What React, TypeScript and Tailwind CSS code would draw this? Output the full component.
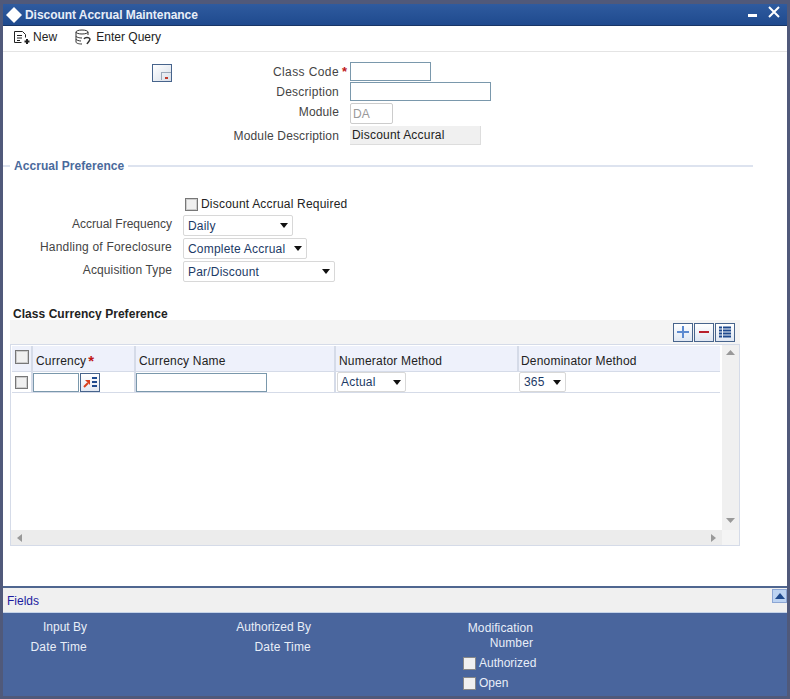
import React from 'react';

const Label = ({ children, className = '' }: { children: React.ReactNode; className?: string }) => (
  <div className={`text-right text-[12px] text-[#444] ${className}`}>{children}</div>
);

const Select = ({ value, className }: { value: string; className: string }) => (
  <div className={`flex items-center justify-between rounded-[2px] border border-[#d8d8d8] bg-white pr-[4px] text-[12px] tracking-[0.2px] text-[#1c3a66] ${className}`}>
    <span>{value}</span>
    <svg width="8" height="5" viewBox="0 0 8 5"><path d="M0 0h8L4 5z" fill="#111" /></svg>
  </div>
);

const Check = ({ className = '' }: { className?: string }) => (
  <div className={`border border-[#777] bg-[#f0f0f0] shadow-[inset_0_0_0_1px_#ccc] ${className}`} />
);

const ToolButton = ({ children }: { children: React.ReactNode }) => (
  <div className="flex h-[19px] w-[20px] items-center justify-center border border-[#47648c] bg-gradient-to-b from-white to-[#dfe7f3]">
    {children}
  </div>
);

const HeaderCell = ({ children, className }: { children: React.ReactNode; className: string }) => (
  <div className={`flex items-end border-r-2 border-[#d5dbe8] pb-[1px] pl-[3px] text-[12px] tracking-[0.2px] text-[#222] ${className}`}>{children}</div>
);

const App = () => {
  return (
    <div className="flex h-[699px] w-[790px] flex-col bg-[#50597a] pb-[3px] pl-[3px] pr-[3px] pt-[4px] font-['Liberation_Sans',Arial,sans-serif]">
      {/* title bar */}
      <div className="flex h-[22px] shrink-0 justify-between border-b border-[#183566] bg-gradient-to-b from-[#2f5b9f] to-[#1f4a8e] pl-[3px] pr-[7px]">
        <div className="flex items-center">
          <svg width="19" height="18" viewBox="0 0 19 18"><path d="M8 1l8 8-8 8-8-8z" fill="#fff" /></svg>
          <span className="text-[12px] font-bold tracking-[-0.05px] text-[#e8eef8]">Discount Accrual Maintenance</span>
        </div>
        <div className="flex items-start gap-[11px] pt-[2px]">
          <div className="mt-[8px] h-[3px] w-[9px] bg-white" />
          <svg width="12" height="12" viewBox="0 0 12 12"><path d="M1 1l10 10M11 1L1 11" stroke="#fff" strokeWidth="2" /></svg>
        </div>
      </div>

      {/* toolbar */}
      <div className="flex h-[26px] shrink-0 items-center border-b border-[#e4e4e4] bg-white pb-[4px] pl-[10px] text-[12px] text-[#222]">
        <svg width="18" height="16" viewBox="0 0 18 16" fill="none" stroke="#222">
          <path d="M1.5 2.5h8l3 3v3M1.5 2.5v11h7" />
          <path d="M4 6.5h5M4 9h5M4 11.500h3" />
          <path d="M14 10v5M11.500 12.500h5" strokeWidth="2" />
        </svg>
        <span className="ml-[2px] tracking-[0.1px]">New</span>
        <svg className="ml-[17px]" width="18" height="16" viewBox="0 0 18 16" fill="none" stroke="#333">
          <ellipse cx="8" cy="3" rx="6" ry="2" />
          <path d="M2 3v10c0 1 2 2 6 2M14 3v3M2 7c0 1 3 2 6 2M2 10c0 1 3 2 5 2" />
          <path d="M10 10c1-2 5-2 6 0 0 2-2 3-3 5" strokeWidth="1.500" />
        </svg>
        <span className="ml-[4px]">Enter Query</span>
      </div>

      {/* body */}
      <div className="flex min-h-0 flex-1 flex-col bg-white">
        <div className="flex h-[98px] shrink-0 pt-[10px]">
          <div className="ml-[149px] mt-[2px] flex h-[18px] w-[20px] items-end justify-end border border-[#47648c] bg-gradient-to-br from-white to-[#d8dfe9] pb-[1px]">
            <div className="h-[8px] w-[10px] border-l border-t border-[#9aa7b8]">
              <div className="ml-[3px] mt-[4px] h-[2px] w-[3px] bg-[#c0392b]" />
            </div>
          </div>
          <div className="flex w-[167px] flex-col">
            <div className="flex h-[20px] items-center justify-end">
              <Label className="tracking-[0.4px]">Class Code</Label>
            </div>
            <div className="flex h-[20px] items-center justify-end">
              <Label className="tracking-[0.25px]">Description</Label>
            </div>
            <div className="flex h-[20px] items-center justify-end">
              <Label className="tracking-[0.15px]">Module</Label>
            </div>
            <div className="mt-[4px] flex h-[20px] items-center justify-end">
              <Label className="tracking-[0.15px]">Module Description</Label>
            </div>
          </div>
          <div className="flex w-[11px] flex-col">
            <div className="pl-[3px] pt-[1px] text-[13px] font-bold leading-[18px] text-[#c01818]">*</div>
          </div>
          <div className="flex flex-col">
            <div className="h-[19px] w-[81px] border border-[#7a98ac] bg-white" />
            <div className="mt-[1px] h-[19px] w-[141px] border border-[#7a98ac] bg-white" />
            <div className="mt-[2px] flex h-[21px] w-[43px] items-center rounded-[2px] border border-[#ccc] bg-white pl-[2px] text-[12px] text-[#999]">DA</div>
            <div className="mt-[2px] flex h-[19px] w-[131px] items-center border-b border-r border-[#ddd] bg-[#f0f0f0] pl-[2px] text-[12px] tracking-[0.2px] text-[#222]">Discount Accural</div>
          </div>
        </div>

        {/* accrual preference */}
        <div className="mt-[8px] flex h-[16px] w-[750px] shrink-0 items-center">
          <div className="h-[2px] w-[7px] bg-[#dde3ef]" />
          <span className="ml-[4px] text-[12px] font-bold tracking-[0.05px] text-[#4a6a9c]">Accrual Preference</span>
          <div className="ml-[4px] h-[2px] flex-1 bg-[#dde3ef]" />
        </div>
        <div className="mt-[21px] flex h-[18px] shrink-0 items-center pl-[182px] text-[12px] tracking-[0.2px] text-[#222]">
          <Check className="h-[13px] w-[13px]" />
          <span className="ml-[3px]">Discount Accrual Required</span>
        </div>
        <div className="mt-[2px] flex shrink-0 flex-col gap-[2px]">
          <div className="flex h-[21px] items-center">
            <Label className="mb-[3px] w-[169px]">Accrual Frequency</Label>
            <Select value="Daily" className="ml-[11px] h-[21px] w-[110px] pl-[4px]" />
          </div>
          <div className="flex h-[21px] items-center">
            <Label className="mb-[3px] w-[169px] tracking-[0.2px]">Handling of Foreclosure</Label>
            <Select value="Complete Accrual" className="ml-[11px] h-[21px] w-[124px] pl-[4px]" />
          </div>
          <div className="flex h-[21px] items-center">
            <Label className="mb-[3px] w-[169px] tracking-[0.13px]">Acquisition Type</Label>
            <Select value="Par/Discount" className="ml-[11px] h-[21px] w-[152px] pl-[4px]" />
          </div>
        </div>

        {/* class currency preference */}
        <div className="mt-[26px] h-[12px] shrink-0 pl-[10px] text-[12px] font-bold leading-[12px] tracking-[0.05px] text-[#222]">Class Currency Preference</div>
        <div className="ml-[7px] flex h-[24px] w-[730px] shrink-0 items-center justify-end gap-[1px] bg-[#f4f4f4] pr-[5px]">
          <ToolButton>
            <svg width="14" height="14" viewBox="0 0 14 14"><path d="M7 1v12M1 7h12" stroke="#5c8ad0" strokeWidth="2" /></svg>
          </ToolButton>
          <ToolButton>
            <svg width="14" height="14" viewBox="0 0 14 14"><path d="M2 7h10" stroke="#b8202c" strokeWidth="2" /></svg>
          </ToolButton>
          <ToolButton>
            <svg width="14" height="12" viewBox="0 0 14 12"><path d="M1 1.500h3M5 1.500h8M1 4.500h3M5 4.500h8M1 7.500h3M5 7.500h8M1 10.500h3M5 10.500h8" stroke="#1f4a8e" strokeWidth="2" /></svg>
          </ToolButton>
        </div>

        <div className="ml-[7px] flex h-[202px] w-[730px] shrink-0 flex-col border border-[#d5dbe8]">
          <div className="flex min-h-0 flex-1">
            <div className="flex min-w-0 flex-1 flex-col pl-[1px] pt-[1px]">
              <div className="flex h-[26px] w-[708px] shrink-0 border-b border-[#d5dbe8] bg-[#eef1fb]">
                <div className="flex w-[21px] items-start justify-center border-r-2 border-[#d5dbe8] pt-[4px]">
                  <Check className="h-[14px] w-[14px]" />
                </div>
                <HeaderCell className="w-[103px]">
                  Currency<span className="mb-[2px] ml-[2px] text-[15px] font-bold leading-[15px] text-[#c01818]">*</span>
                </HeaderCell>
                <HeaderCell className="w-[200px]">Currency Name</HeaderCell>
                <HeaderCell className="w-[183px]">Numerator Method</HeaderCell>
                <div className="flex flex-1 items-end pb-[1px] pl-[2px] text-[12px] tracking-[0.2px] text-[#222]">Denominator Method</div>
              </div>
              <div className="flex h-[21px] w-[708px] shrink-0 border-b border-[#d5dbe8]">
                <div className="flex w-[21px] items-center justify-center border-r-2 border-[#d5dbe8]">
                  <Check className="h-[13px] w-[13px]" />
                </div>
                <div className="flex w-[103px] items-center border-r-2 border-[#d5dbe8]">
                  <div className="h-[19px] w-[46px] border border-[#7a98ac] bg-white" />
                  <div className="ml-[1px] flex h-[19px] w-[20px] items-center justify-center border border-[#47648c] bg-gradient-to-b from-white to-[#e4e9f2]">
                    <svg width="16" height="12" viewBox="0 0 16 12">
                      <path d="M2 11l4-4" stroke="#d9401c" strokeWidth="2" />
                      <path d="M3 4h5v5z" fill="#d9401c" />
                      <path d="M10 2h5M10 6h5M10 10h5" stroke="#1f4a8e" strokeWidth="2" />
                    </svg>
                  </div>
                </div>
                <div className="flex w-[200px] items-center border-r-2 border-[#d5dbe8]">
                  <div className="h-[19px] w-[131px] border border-[#7a98ac] bg-white" />
                </div>
                <div className="flex w-[183px] items-center pl-[1px]">
                  <Select value="Actual" className="h-[20px] w-[69px] pl-[3px]" />
                </div>
                <div className="flex flex-1 items-center">
                  <Select value="365" className="h-[20px] w-[47px] pl-[4px]" />
                </div>
              </div>
            </div>
            {/* vertical scrollbar */}
            <div className="flex w-[17px] shrink-0 flex-col items-center justify-between bg-[#f0f0f0] pb-[7px] pt-[5px]">
              <svg width="9" height="5" viewBox="0 0 9 5"><path d="M4.500 0L9 5H0z" fill="#999" /></svg>
              <svg width="9" height="5" viewBox="0 0 9 5"><path d="M4.500 5L9 0H0z" fill="#999" /></svg>
            </div>
          </div>
          {/* horizontal scrollbar */}
          <div className="flex h-[15px] shrink-0">
            <div className="flex flex-1 items-center justify-between bg-[#ececec] px-[6px]">
              <svg width="5" height="8" viewBox="0 0 5 8"><path d="M0 4l5-4v8z" fill="#999" /></svg>
              <svg width="5" height="8" viewBox="0 0 5 8"><path d="M5 4L0 0v8z" fill="#999" /></svg>
            </div>
            <div className="w-[17px] bg-[#f4f4f4]" />
          </div>
        </div>

        <div className="flex-1" />

        {/* fields bar */}
        <div className="flex h-[27px] shrink-0 items-center justify-between border-b border-[#c5d3e8] border-t-2 border-t-[#4f6690] bg-[#f0f0f0] pl-[4px]">
          <span className="mt-[2px] text-[12px] text-[#1c1ca0]">Fields</span>
          <div className="mb-[9px] flex h-[14px] w-[15px] items-center justify-center border border-[#8ca6d4] bg-[#bcd3f2]">
            <svg width="10" height="6" viewBox="0 0 10 6"><path d="M5 0l5 6H0z" fill="#1f4a8e" /></svg>
          </div>
        </div>

        {/* audit panel */}
        <div className="flex h-[83px] shrink-0 bg-[#49659d] pt-[7px] text-[12px] text-[#e8eef8]">
          <div className="flex w-[84px] flex-col items-end gap-[6px]">
            <div className="leading-[14px]">Input By</div>
            <div className="leading-[14px] tracking-[0.2px]">Date Time</div>
          </div>
          <div className="ml-[139px] flex w-[85px] flex-col items-end gap-[6px]">
            <div className="leading-[14px]">Authorized By</div>
            <div className="leading-[14px] tracking-[0.2px]">Date Time</div>
          </div>
          <div className="ml-[152px] flex flex-col">
            <div className="mt-[1px] w-[70px] pl-[4px] text-right leading-[15px] tracking-[0.1px]">Modification Number</div>
            <div className="mt-[5px] flex h-[14px] items-center">
              <div className="h-[13px] w-[13px] border border-[#888] bg-[#f0f0f0]" />
              <span className="ml-[3px]">Authorized</span>
            </div>
            <div className="mt-[6px] flex h-[14px] items-center">
              <div className="h-[13px] w-[13px] border border-[#888] bg-[#f0f0f0]" />
              <span className="ml-[3px]">Open</span>
            </div>
          </div>
        </div>
      </div>
    </div>
  );
};

export default App;
